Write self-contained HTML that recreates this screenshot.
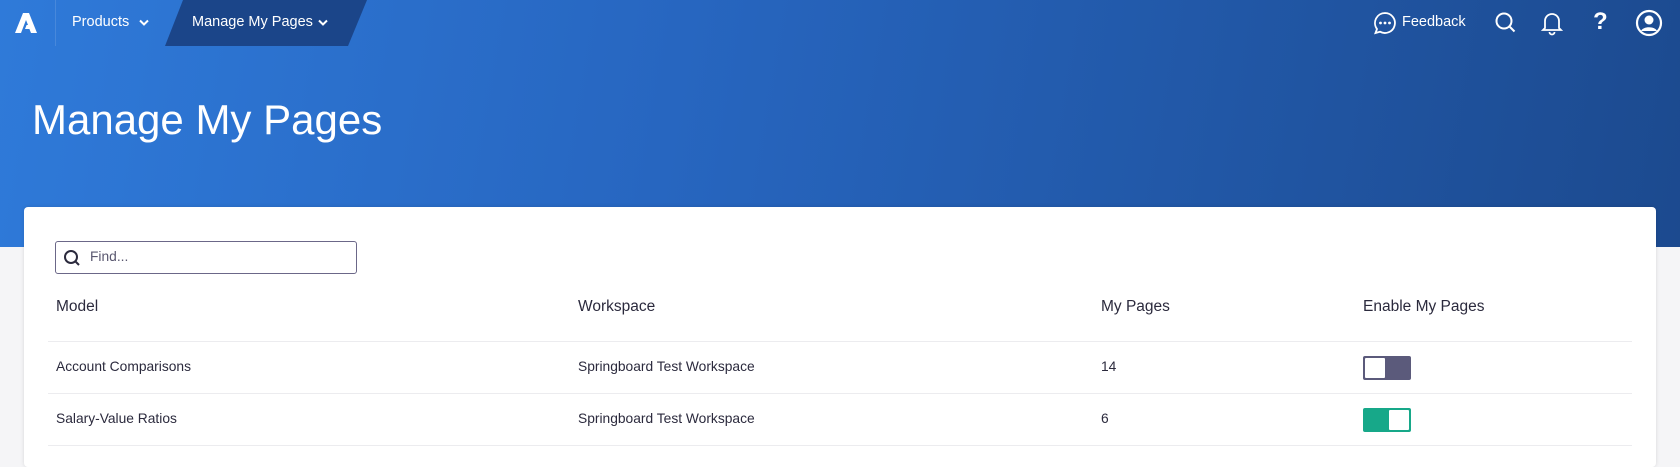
<!DOCTYPE html>
<html><head><style>
*{margin:0;padding:0;box-sizing:border-box}
body{width:1680px;height:458px;overflow:hidden;background:#f5f5f7;font-family:"Liberation Sans",sans-serif;position:relative;color:#2b2a3d}
.hero{position:absolute;left:0;top:0;width:1680px;height:247px;background:linear-gradient(100deg,#2f7ad9 0%,#2766c0 40%,#1c4a8f 100%)}
.nav{position:absolute;left:0;top:0;width:1680px;height:46px}
.abs{position:absolute}
.t{color:#fff;font-size:14.5px;position:absolute;white-space:nowrap}
.card{position:absolute;left:24px;top:207px;width:1632px;height:260px;background:#fff;border-radius:4px;box-shadow:0 0 4px rgba(0,0,0,.12)}
.line{position:absolute;left:48px;width:1584px;height:1px;background:#ececef}
.h{position:absolute;font-size:15.5px;color:#2b2a3d}
.c{position:absolute;font-size:13.8px;color:#2b2a3d}
.tg{position:absolute;left:1363px;width:48px;height:24px;border-radius:2px}
.tg i{position:absolute;top:2px;width:20px;height:20px;background:#fff;border-radius:1px}
</style></head><body>
<div class="hero"></div>
<div class="nav">
<svg class="abs" style="left:15px;top:13px" width="25" height="20" viewBox="0 0 25 20"><path d="M8 0h6l8 20h-6l-1.6-4H10l1.6-4h1.4L11 7 6 20H0z" fill="#fff"/></svg>
<div class="abs" style="left:55px;top:0;width:1px;height:46px;background:rgba(255,255,255,.12)"></div>
<div class="t" style="left:72px;top:14px">Products</div>
<svg class="abs" style="left:139px;top:19px" width="10" height="8"><path d="M1 1.5l4 4 4-4" stroke="#fff" stroke-width="2" fill="none"/></svg>
<svg class="abs" style="left:165px;top:0" width="202" height="46"><path d="M18 0H202L183 46H0z" fill="#1b4589"/></svg>
<div class="t" style="left:192px;top:14px">Manage My Pages</div>
<svg class="abs" style="left:318px;top:19px" width="10" height="8"><path d="M1 1.5l4 4 4-4" stroke="#fff" stroke-width="2" fill="none"/></svg>
<svg class="abs" style="left:1373px;top:11px" width="24" height="24" viewBox="0 0 24 24"><path d="M12 2a10 10 0 1 1-5 18.7L2.5 22l1.5-4A10 10 0 0 1 12 2z" stroke="#fff" stroke-width="1.8" fill="none"/><circle cx="7.5" cy="12" r="1.4" fill="#fff"/><circle cx="12" cy="12" r="1.4" fill="#fff"/><circle cx="16.5" cy="12" r="1.4" fill="#fff"/></svg>
<div class="t" style="left:1402px;top:14px">Feedback</div>
<svg class="abs" style="left:1494px;top:11px" width="24" height="24"><circle cx="10" cy="10" r="7.5" stroke="#fff" stroke-width="2" fill="none"/><path d="M15.5 15.5l5 5" stroke="#fff" stroke-width="2"/></svg>
<svg class="abs" style="left:1541px;top:10px" width="22" height="26"><path d="M4 18V11a7 7 0 0 1 14 0v7l2 2H2z" stroke="#fff" stroke-width="1.8" fill="none"/><path d="M8.5 22a2.5 2.5 0 0 0 5 0" stroke="#fff" stroke-width="1.8" fill="none"/></svg>
<div class="t" style="left:1593px;top:8px;font-size:24px;font-weight:bold">?</div>
<svg class="abs" style="left:1635px;top:9px" width="28" height="28"><circle cx="14" cy="14" r="12" stroke="#fff" stroke-width="2.2" fill="none"/><circle cx="14" cy="11" r="4.5" fill="#fff"/><path d="M6 22c2-5 14-5 16 0" fill="#fff"/></svg>
</div>
<div class="t" style="left:32px;top:96px;font-size:42px">Manage My Pages</div>
<div class="card"></div>
<div class="abs" style="left:55px;top:241px;width:302px;height:33px;border:1px solid #6b6788;border-radius:3px"></div>
<svg class="abs" style="left:63px;top:249px" width="18" height="18"><circle cx="8" cy="8" r="6" stroke="#2b2a3d" stroke-width="2" fill="none"/><path d="M12.5 12.5l3.5 3.5" stroke="#2b2a3d" stroke-width="2"/></svg>
<div class="c" style="left:90px;top:249px;color:#5a5870">Find...</div>
<div class="h" style="left:56px;top:298px">Model</div>
<div class="h" style="left:578px;top:298px">Workspace</div>
<div class="h" style="left:1101px;top:298px">My Pages</div>
<div class="h" style="left:1363px;top:298px">Enable My Pages</div>
<div class="line" style="top:341px"></div>
<div class="c" style="left:56px;top:359px">Account Comparisons</div>
<div class="c" style="left:578px;top:359px">Springboard Test Workspace</div>
<div class="c" style="left:1101px;top:359px">14</div>
<div class="tg" style="top:356px;background:#5b5a7b"><i style="left:2px"></i></div>
<div class="line" style="top:393px"></div>
<div class="c" style="left:56px;top:411px">Salary-Value Ratios</div>
<div class="c" style="left:578px;top:411px">Springboard Test Workspace</div>
<div class="c" style="left:1101px;top:411px">6</div>
<div class="tg" style="top:408px;background:#17a889"><i style="left:26px"></i></div>
<div class="line" style="top:445px"></div>
</body></html>
